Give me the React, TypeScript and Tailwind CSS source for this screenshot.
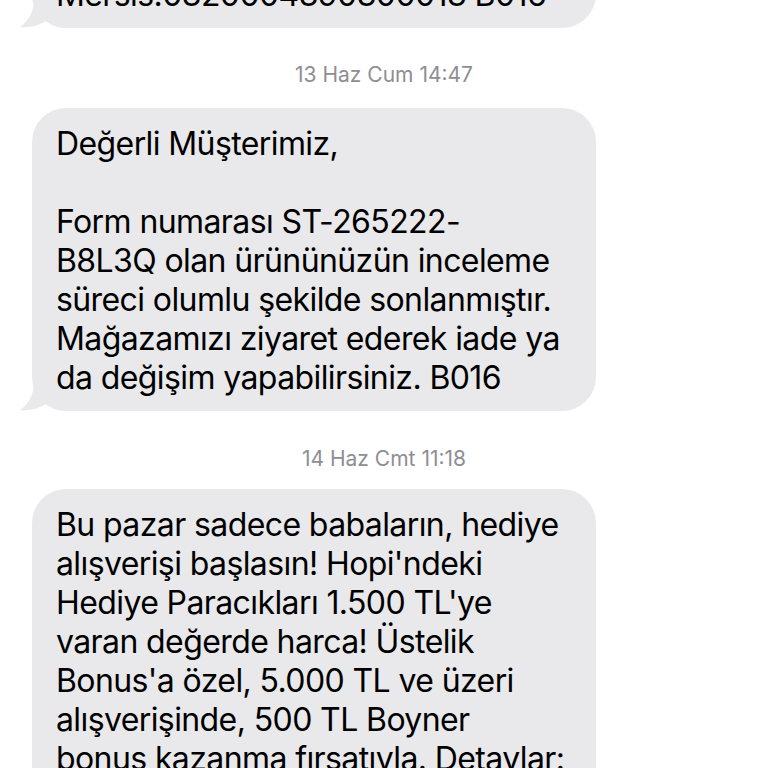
import React from "react";

const FONT = { fontFamily: "Inter, 'Noto Sans', 'Liberation Sans', sans-serif" };

function Tail() {
  return (
    <svg
      className="absolute bottom-0 left-[-12px]"
      width="34"
      height="30"
      viewBox="0 0 34 30"
      fill="#e9e9eb"
    >
      <path d="M14 0 C14 12 10 22 0 29 C10 30 22 27 30 20 L34 0 Z" />
    </svg>
  );
}

function Bubble({ lines }: { lines: string[] }) {
  return (
    <div className="relative ml-[32px] w-[564px] rounded-[34px] bg-[#e9e9eb] px-[24px] pb-[14px] pt-[16px]">
      <Tail />
      <div className="relative text-[32px] leading-[39px] tracking-[-0.6px] text-black">
        {lines.map((line, i) => (
          <div key={i} className="h-[39px] whitespace-nowrap">
            {line}
          </div>
        ))}
      </div>
    </div>
  );
}

function Stamp({ text, tall }: { text: string; tall?: boolean }) {
  return (
    <div
      className={
        tall
          ? "flex h-[80px] items-start justify-center pt-[33px] text-[21px] leading-[28px] text-[#8e8e93]"
          : "flex h-[78px] items-start justify-center pt-[34px] text-[21px] leading-[28px] text-[#8e8e93]"
      }
    >
      {text}
    </div>
  );
}

export default function App() {
  return (
    <div className="h-[768px] w-[768px] overflow-hidden bg-white" style={FONT}>
      <div className="mt-[-41px]">
        <Bubble lines={["Mersis:0320004390300013 B016"]} />
        <Stamp text="13 Haz Cum 14:47" tall />
        <Bubble
          lines={[
            "Değerli Müşterimiz,",
            "",
            "Form numarası ST-265222-",
            "B8L3Q olan ürününüzün inceleme",
            "süreci olumlu şekilde sonlanmıştır.",
            "Mağazamızı ziyaret ederek iade ya",
            "da değişim yapabilirsiniz. B016",
          ]}
        />
        <Stamp text="14 Haz Cmt 11:18" />
        <Bubble
          lines={[
            "Bu pazar sadece babaların, hediye",
            "alışverişi başlasın! Hopi'ndeki",
            "Hediye Paracıkları 1.500 TL'ye",
            "varan değerde harca! Üstelik",
            "Bonus'a özel, 5.000 TL ve üzeri",
            "alışverişinde, 500 TL Boyner",
            "bonus kazanma fırsatıyla. Detaylar:",
            "boyner.com.tr",
          ]}
        />
      </div>
    </div>
  );
}
